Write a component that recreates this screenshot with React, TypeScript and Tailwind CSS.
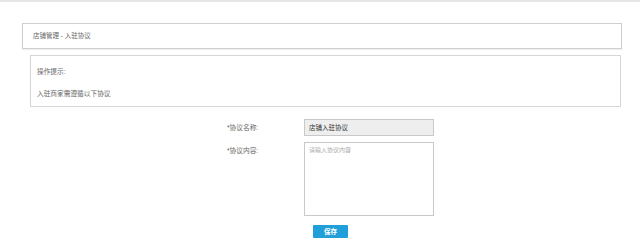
export default function App() {
  return (
    <div
      className="w-[640px] h-[250px] bg-white text-[#555] overflow-hidden"
      style={{ fontFamily: '"Liberation Sans", "Noto Sans CJK SC", sans-serif' }}
    >
      {/* top strip */}
      <div className="h-[2px] bg-[#e6e6e6]" />

      {/* breadcrumb */}
      <div className="ml-[22px] mt-[21px] w-[600px] h-[26px] border border-[#cfcfcf] shadow-[0_1px_1px_rgba(0,0,0,0.06)] flex items-center pl-[10px] text-[6.5px] text-[#666]">
        店铺管理 - 入驻协议
      </div>

      {/* tips */}
      <div className="ml-[30px] mt-[6px] w-[591px] h-[52px] border border-[#d6d6d6] px-[6px] pt-[11px] text-[6.7px] text-[#666]">
        <p className="leading-[9px]">操作提示:</p>
        <p className="leading-[9px] mt-[13px]">入驻商家需遵循以下协议</p>
      </div>

      {/* form */}
      <div className="mt-[12px] ml-[227px] flex flex-col">
        <div className="flex items-center h-[17px]">
          <span className="w-[77px] pt-[1px] text-[6.7px] text-[#666]">*协议名称:</span>
          <div className="w-[130px] h-[17px] bg-[#eeeeee] border border-[#c9c9c9] flex items-center pl-[4px] text-[6.5px] text-[#333]">
            店铺入驻协议
          </div>
        </div>
        <div className="flex mt-[6px]">
          <span className="w-[77px] pt-[4px] text-[6.7px] text-[#666]">*协议内容:</span>
          <div className="w-[130px] h-[74px] border border-[#c9c9c9] pl-[4px] pt-[3px] text-[6px] text-[#aaa]">
            请输入协议内容
          </div>
        </div>
        <div className="ml-[86px] mt-[9px]">
          <button className="w-[35px] h-[13px] bg-[#219fd9] rounded-[1px] text-white text-[6.5px] font-bold flex items-center justify-center">
            保存
          </button>
        </div>
      </div>
    </div>
  );
}
